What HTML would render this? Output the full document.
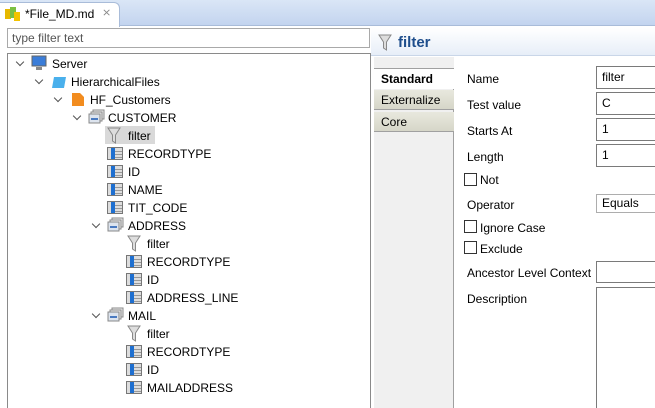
<!DOCTYPE html>
<html><head><style>
*{margin:0;padding:0;box-sizing:border-box}
html,body{width:655px;height:408px;overflow:hidden}
body{background:#fff;font-family:"Liberation Sans",sans-serif;font-size:12px;color:#000;position:relative}
.a{position:absolute}
.row{position:absolute;height:18px;line-height:18px;white-space:nowrap;margin-top:1px}
.chev{position:absolute;width:6px;height:6px;border-right:1.5px solid #555;border-bottom:1.5px solid #555;transform:rotate(45deg)}
.col{position:absolute;width:16px;height:13px;border:1px solid #777;background:linear-gradient(90deg,#ddd 0 3px,#1e6fd0 3px 7px,#ddd 7px);}
.col:after{content:"";position:absolute;left:7px;right:0;top:3px;height:1px;background:#999;box-shadow:0 3px 0 #999,0 6px 0 #999}
.lbl{position:absolute;left:467px;margin-top:1px}
.fld{position:absolute;left:596px;width:70px;height:23px;border:1px solid #7a7a7a;padding-left:5px;line-height:21px}
.cb{position:absolute;left:464px;width:13px;height:13px;border:1px solid #333;background:#fff}
</style></head><body>
<div class="a" style="left:0;top:0;width:655px;height:26px;background:linear-gradient(#dae6f6,#c3d4ef);border-bottom:1px solid #a9bcd9"></div>
<div class="a" style="left:0;top:2px;width:120px;height:25px;background:#fff;border:1px solid #a9bcd9;border-left:none;border-bottom:none;border-top-right-radius:6px"></div>
<svg class="a" style="left:4px;top:6px" width="18" height="16"><rect x="1" y="3" width="6" height="10" fill="#e6b800"/><rect x="6" y="1" width="6" height="11" fill="#7bc043"/><rect x="10" y="6" width="6" height="9" fill="#f3c300"/></svg>
<div class="a" style="left:25px;top:7px;font-size:12px">*File_MD.md</div>
<div class="a" style="left:102px;top:6px;color:#888;font-size:11px">⨯</div>
<div class="a" style="left:7px;top:28px;width:363px;height:20px;border:1px solid #a9a9a9;padding-left:4px;line-height:18px;color:#555">type filter text</div>
<div class="a" style="left:7px;top:53px;width:364px;height:360px;border:1px solid #8a8a8a;border-bottom:none"></div>
<div class="a" style="left:371px;top:28px;width:284px;height:28px;background:linear-gradient(#fff,#e7eef8);border-bottom:1px solid #c9d6e8"></div>
<svg class="a" style="left:378px;top:34px" width="14" height="17"><path d="M1 1h12l-4.5 7v8l-3-2v-6z" fill="#ddd" stroke="#888"/></svg>
<div class="a" style="left:398px;top:34px;font-weight:bold;font-size:15px;color:#1f4e8c">filter</div>
<div class="a" style="left:374px;top:57px;width:80px;height:351px;background:#f0f0f0;border-right:1px solid #a0a0a0"></div>
<div class="a" style="left:374px;top:57px;width:80px;height:12px;background:#f0f0f0;border-bottom:1px solid #a0a0a0"></div>
<div class="a" style="left:374px;top:69px;width:81px;height:20px;background:#fff;font-weight:bold;padding-left:7px;line-height:20px">Standard</div>
<div class="a" style="left:374px;top:90px;width:80px;height:20px;background:linear-gradient(#e8e8de,#d6d6c8);border-bottom:1px solid #a0a0a0;padding-left:7px;line-height:20px">Externalize</div>
<div class="a" style="left:374px;top:112px;width:80px;height:20px;background:linear-gradient(#e8e8de,#d6d6c8);border-bottom:1px solid #a0a0a0;padding-left:7px;line-height:20px">Core</div>
<div class="lbl" style="top:71px">Name</div><div class="fld" style="top:66px">filter</div>
<div class="lbl" style="top:97px">Test value</div><div class="fld" style="top:92px">C</div>
<div class="lbl" style="top:123px">Starts At</div><div class="fld" style="top:118px">1</div>
<div class="lbl" style="top:149px">Length</div><div class="fld" style="top:144px">1</div>
<div class="cb" style="top:173px"></div><div class="a" style="left:480px;top:173px">Not</div>
<div class="lbl" style="top:197px">Operator</div><div class="fld" style="top:194px;height:19px;line-height:17px;border-color:#adadad">Equals</div>
<div class="cb" style="top:220px"></div><div class="a" style="left:480px;top:221px">Ignore Case</div>
<div class="cb" style="top:241px"></div><div class="a" style="left:480px;top:242px">Exclude</div>
<div class="lbl" style="top:265px">Ancestor Level Context</div><div class="fld" style="top:261px;height:22px"></div>
<div class="lbl" style="top:291px">Description</div><div class="fld" style="top:287px;height:125px"></div>

<div class="chev" style="left:17px;top:59px"></div>
<svg class="a" style="left:31px;top:55px" width="17" height="16"><rect x="1" y="1" width="14" height="10" fill="#3b7dd8" stroke="#666"/><rect x="5" y="12" width="6" height="3" fill="#888"/></svg>
<div class="row" style="left:52px;top:54px">Server</div>
<div class="chev" style="left:36px;top:77px"></div>
<svg class="a" style="left:51px;top:74px" width="16" height="15"><path d="M3 3h12l-2 11H1z" fill="#4ab0ec"/></svg>
<div class="row" style="left:71px;top:72px">HierarchicalFiles</div>
<div class="chev" style="left:55px;top:95px"></div>
<svg class="a" style="left:71px;top:92px" width="14" height="15"><path d="M1 1h8l4 4v9H1z" fill="#f28c1f"/></svg>
<div class="row" style="left:90px;top:90px">HF_Customers</div>
<div class="chev" style="left:74px;top:113px"></div>
<svg class="a" style="left:88px;top:109px" width="17" height="16"><rect x="5" y="1" width="11" height="9" fill="#eee" stroke="#888"/><rect x="3" y="3" width="11" height="9" fill="#eee" stroke="#888"/><rect x="1" y="5" width="11" height="9" fill="#dde4ee" stroke="#888"/><rect x="3" y="9" width="7" height="2" fill="#4a7ac0"/></svg>
<div class="row" style="left:108px;top:108px">CUSTOMER</div>
<div class="a" style="left:105px;top:126px;width:50px;height:18px;background:#d9d9d9"></div>
<svg class="a" style="left:107px;top:127px" width="14" height="17"><path d="M1 1h12l-4.5 7v8l-3-2v-6z" fill="#ddd" stroke="#888"/></svg>
<div class="row" style="left:128px;top:126px">filter</div>
<div class="col" style="left:107px;top:147px"></div><div class="row" style="left:128px;top:144px">RECORDTYPE</div>
<div class="col" style="left:107px;top:165px"></div><div class="row" style="left:128px;top:162px">ID</div>
<div class="col" style="left:107px;top:183px"></div><div class="row" style="left:128px;top:180px">NAME</div>
<div class="col" style="left:107px;top:201px"></div><div class="row" style="left:128px;top:198px">TIT_CODE</div>
<div class="chev" style="left:93px;top:221px"></div>
<svg class="a" style="left:107px;top:217px" width="17" height="16"><rect x="5" y="1" width="11" height="9" fill="#eee" stroke="#888"/><rect x="3" y="3" width="11" height="9" fill="#eee" stroke="#888"/><rect x="1" y="5" width="11" height="9" fill="#dde4ee" stroke="#888"/><rect x="3" y="9" width="7" height="2" fill="#4a7ac0"/></svg>
<div class="row" style="left:128px;top:216px">ADDRESS</div>
<svg class="a" style="left:127px;top:235px" width="14" height="17"><path d="M1 1h12l-4.5 7v8l-3-2v-6z" fill="#ddd" stroke="#888"/></svg>
<div class="row" style="left:147px;top:234px">filter</div>
<div class="col" style="left:126px;top:255px"></div><div class="row" style="left:147px;top:252px">RECORDTYPE</div>
<div class="col" style="left:126px;top:273px"></div><div class="row" style="left:147px;top:270px">ID</div>
<div class="col" style="left:126px;top:291px"></div><div class="row" style="left:147px;top:288px">ADDRESS_LINE</div>
<div class="chev" style="left:93px;top:311px"></div>
<svg class="a" style="left:107px;top:307px" width="17" height="16"><rect x="5" y="1" width="11" height="9" fill="#eee" stroke="#888"/><rect x="3" y="3" width="11" height="9" fill="#eee" stroke="#888"/><rect x="1" y="5" width="11" height="9" fill="#dde4ee" stroke="#888"/><rect x="3" y="9" width="7" height="2" fill="#4a7ac0"/></svg>
<div class="row" style="left:128px;top:306px">MAIL</div>
<svg class="a" style="left:127px;top:325px" width="14" height="17"><path d="M1 1h12l-4.5 7v8l-3-2v-6z" fill="#ddd" stroke="#888"/></svg>
<div class="row" style="left:147px;top:324px">filter</div>
<div class="col" style="left:126px;top:345px"></div><div class="row" style="left:147px;top:342px">RECORDTYPE</div>
<div class="col" style="left:126px;top:363px"></div><div class="row" style="left:147px;top:360px">ID</div>
<div class="col" style="left:126px;top:381px"></div><div class="row" style="left:147px;top:378px">MAILADDRESS</div>
</body></html>
